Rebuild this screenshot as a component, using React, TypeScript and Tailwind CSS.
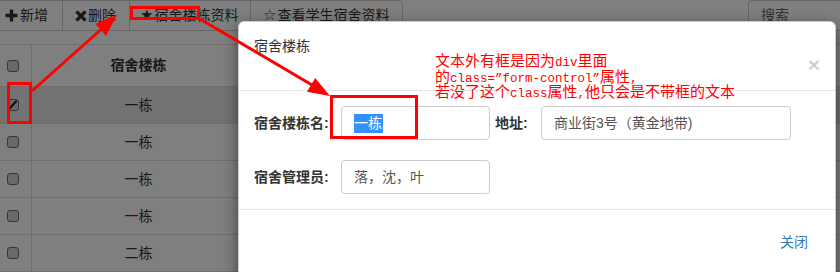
import React from "react";

const rows = ["一栋", "一栋", "一栋", "一栋", "二栋"];

function Checkbox({ checked }: { checked?: boolean }) {
  return (
    <div className="w-[12px] h-[12px] rounded-[3px] border border-[#6f6f6f] bg-[#d2d2d2] relative">
      {checked && (
        <svg width="12" height="12" viewBox="0 0 12 12" className="absolute -left-px -top-px">
          <path d="M2.5 9.5 L9 2.5" stroke="#222" strokeWidth="2.2" strokeLinecap="round" />
        </svg>
      )}
    </div>
  );
}

function Cjk({ children }: { children: React.ReactNode }) {
  return <span className="text-[15px] font-['Noto_Sans_CJK_SC',sans-serif]">{children}</span>;
}
function Mono({ children }: { children: React.ReactNode }) {
  return <span className="text-[12.5px] font-['Liberation_Mono',monospace]">{children}</span>;
}

export default function App() {
  return (
    <div className="relative w-[840px] h-[272px] overflow-hidden bg-white text-[#333] text-[14px] font-['Liberation_Sans','Noto_Sans_CJK_SC',sans-serif]">
      {/* underlying page */}
      <div className="flex h-[31px] justify-between">
        <div className="flex h-[31px]">
          <div className="w-[63px] h-[31px] border border-[#ccc] border-l-0 flex items-center pl-[5px] gap-[2px]">
            <svg width="13" height="13" viewBox="0 0 13 13">
              <path d="M6.5 0.5 V12.5 M0.5 6.5 H12.5" stroke="#333" strokeWidth="3.4" />
            </svg>
            <span>新增</span>
          </div>
          <div className="w-[68px] h-[31px] -ml-px border border-[#ccc] flex items-center pl-[12px] gap-[1px]">
            <svg width="12" height="12" viewBox="0 0 12 12">
              <path d="M1.5 1.5 L10.5 10.5 M10.5 1.5 L1.5 10.5" stroke="#333" strokeWidth="3.2" />
            </svg>
            <span>删除</span>
          </div>
          <div className="w-[122px] h-[31px] -ml-px border border-[#ccc] flex items-center pl-[10px] gap-[1px]">
            <span className="font-['DejaVu_Sans'] text-[15px] leading-none">★</span>
            <span>宿舍楼栋资料</span>
          </div>
          <div className="w-[153px] h-[31px] -ml-px border border-[#ccc] rounded-r-[4px] flex items-center pl-[12px] gap-[1px]">
            <span className="font-['DejaVu_Sans'] text-[15px] leading-none">☆</span>
            <span>查看学生宿舍资料</span>
          </div>
        </div>
        <div className="w-[92px] h-[31px] border border-[#ccc] border-r-0 rounded-l-[4px] flex items-center pl-[12px] text-[#666]">
          搜索
        </div>
      </div>

      <div className="mt-[13px] border-t border-[#ddd]">
        <div className="flex h-[42px] border-b border-[#ddd]">
          <div className="w-[32px] border-r border-[#ddd] flex items-center pl-[7px]">
            <Checkbox />
          </div>
          <div className="w-[214px] border-r border-[#ddd] flex items-center justify-center font-bold">
            宿舍楼栋
          </div>
          <div className="flex-1" />
        </div>
        {rows.map((r, i) => (
          <div
            key={i}
            className={`flex h-[37px] border-b border-[#ddd] ${i === 0 ? "bg-[#e6e6e6]" : ""}`}
          >
            <div className="w-[32px] border-r border-[#ddd] flex items-center pl-[7px]">
              <Checkbox checked={i === 0} />
            </div>
            <div className="w-[214px] border-r border-[#ddd] flex items-center justify-center">{r}</div>
            <div className="flex-1" />
          </div>
        ))}
      </div>

      {/* backdrop */}
      <div className="absolute inset-0 bg-black/50" />

      {/* modal */}
      <div className="absolute left-[238px] top-[21px] w-[598px] h-[270px] bg-white rounded-[6px] shadow-[0_5px_15px_rgba(0,0,0,0.5)] border border-black/20 box-border">
        <div className="h-[69px] border-b border-[#e5e5e5] px-[15px] flex justify-between items-start">
          <div className="mt-[14px] leading-[20px] text-[14px] text-[#333]">宿舍楼栋</div>
          <div className="mt-[32px] leading-[21px] text-[21px] font-bold text-black/20 font-['Liberation_Sans']">×</div>
        </div>
        <div className="px-[15px] py-[15px] flex flex-col gap-[20px]">
          <div className="flex items-center h-[34px]">
            <div className="w-[87px] font-bold">宿舍楼栋名:</div>
            <div className="w-[149px] h-[34px] border border-[#ccc] rounded-[4px] flex items-center pl-[12px] text-[#555]">
              <span className="bg-[#3390ff] text-white leading-[19px] pr-[1px]">一栋</span>
            </div>
            <div className="w-[46px] ml-[5px] font-bold">地址:</div>
            <div className="w-[250px] h-[34px] border border-[#ccc] rounded-[4px] flex items-center pl-[12px] text-[#555]">
              商业街3号（黄金地带)
            </div>
          </div>
          <div className="flex items-center h-[34px]">
            <div className="w-[87px] font-bold">宿舍管理员:</div>
            <div className="w-[149px] h-[34px] border border-[#ccc] rounded-[4px] flex items-center pl-[12px] text-[#555]">
              落，沈，叶
            </div>
          </div>
        </div>
        <div className="border-t border-[#e5e5e5] px-[15px] pt-[15px] flex justify-end">
          <div className="h-[34px] px-[12px] leading-[34px] text-[#337ab7]">关闭</div>
        </div>
      </div>

      {/* annotation text */}
      <div className="absolute left-[435px] top-[52px] text-[#ff0000] whitespace-nowrap">
        <div className="h-[15.5px] leading-[15.5px]">
          <Cjk>文本外有框是因为</Cjk>
          <Mono>div</Mono>
          <Cjk>里面</Cjk>
        </div>
        <div className="h-[15.5px] leading-[15.5px]">
          <Cjk>的</Cjk>
          <Mono>class=”form-control”</Mono>
          <Cjk>属性</Cjk>
          <Mono>,</Mono>
        </div>
        <div className="h-[15.5px] leading-[15.5px]">
          <Cjk>若没了这个</Cjk>
          <Mono>class</Mono>
          <Cjk>属性</Cjk>
          <Mono>,</Mono>
          <Cjk>他只会是不带框的文本</Cjk>
        </div>
      </div>

      {/* annotation boxes & arrows */}
      <svg className="absolute inset-0 pointer-events-none" width="840" height="272" viewBox="0 0 840 272">
        <rect x="8.5" y="83.5" width="22" height="39" fill="none" stroke="#ff0000" strokeWidth="3" />
        <rect x="131.5" y="7.5" width="67" height="11" fill="none" stroke="#ff0000" strokeWidth="3" />
        <rect x="331.5" y="96.5" width="85" height="41" fill="none" stroke="#ff0000" strokeWidth="3" />
        <line x1="32" y1="91" x2="101" y2="29.5" stroke="#ff0000" strokeWidth="3" />
        <polygon points="117,15 106,35.7 95.3,23.7" fill="#ff0000" />
        <line x1="200" y1="19" x2="312" y2="85" stroke="#ff0000" strokeWidth="3" />
        <polygon points="330,96 307,91.7 315.2,77.9" fill="#ff0000" />
      </svg>
    </div>
  );
}
